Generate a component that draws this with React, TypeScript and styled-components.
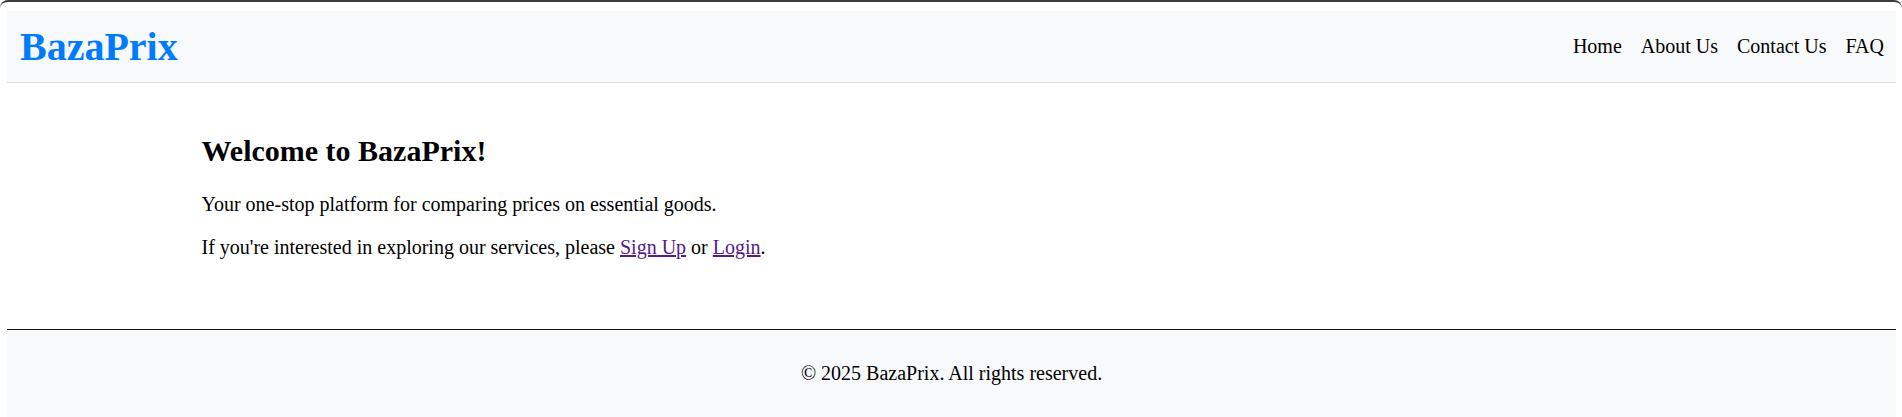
import styled, { createGlobalStyle } from 'styled-components';

const GlobalStyle = createGlobalStyle`
  html, body {
    margin: 0;
    padding: 0;
    background: #ffffff;
  }
  body {
    font-family: 'Liberation Serif', 'Times New Roman', serif;
    font-size: 20px;
    color: #000000;
  }
`;

const Frame = styled.div`
  border-top: 2px solid #3a3a3a;
  border-radius: 8px 8px 0 0;
  padding: 9px 6px 0 7px;
`;

const Header = styled.header`
  display: flex;
  flex-direction: row;
  justify-content: space-between;
  align-items: center;
  padding: 12px 12px 12px 13px;
  background: #f8f9fa;
  border-bottom: 1px solid #dcdcdc;
`;

const Logo = styled.h1`
  margin: 0;
  font-size: 40px;
  font-weight: 700;
  color: #007bff;
`;

const Nav = styled.nav`
  display: flex;
  flex-direction: row;
  gap: 19px;

  > a {
    font-size: 20px;
    color: #000000;
    text-decoration: none;
  }
`;

const Main = styled.main`
  max-width: 1500px;
  margin: 0 auto;
  padding: 26px 0 25px;

  > h2 {
    font-size: 30px;
    font-weight: 700;
    margin: 25px 0;
  }

  > p {
    margin: 20px 0;
  }

  a {
    color: #551a8b;
    text-decoration: underline;
  }
`;

const Footer = styled.footer`
  margin-top: 25px;
  padding: 12px;
  background: #f8f9fa;
  border-top: 1px solid #111111;
  text-align: center;

  > p {
    margin: 20px 0;
  }
`;

const App = () => {
  return (
    <>
      <GlobalStyle />
      <Frame>
        <Header>
          <Logo>BazaPrix</Logo>
          <Nav>
            <a href="#">Home</a>
            <a href="#">About Us</a>
            <a href="#">Contact Us</a>
            <a href="#">FAQ</a>
          </Nav>
        </Header>
        <Main>
          <h2>Welcome to BazaPrix!</h2>
          <p>Your one-stop platform for comparing prices on essential goods.</p>
          <p>
            If you're interested in exploring our services, please <a href="#">Sign Up</a> or{' '}
            <a href="#">Login</a>.
          </p>
        </Main>
        <Footer>
          <p>© 2025 BazaPrix. All rights reserved.</p>
        </Footer>
      </Frame>
    </>
  );
};

export default App;
